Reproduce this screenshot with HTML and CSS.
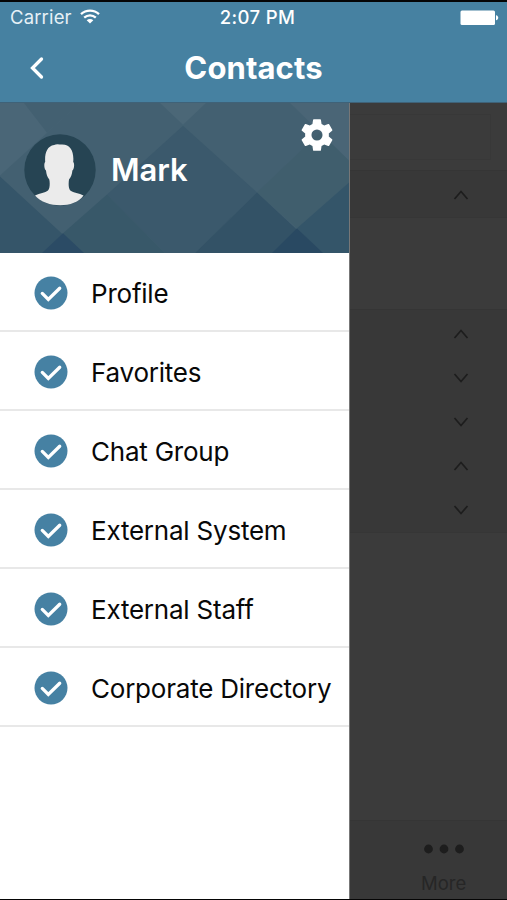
FILE: index.html
```html
<!DOCTYPE html>
<html lang="en">
<head>
<meta charset="utf-8">
<title>Contacts</title>
<link rel="stylesheet" href="styles.css">
</head>
<body>
<svg class="defs" width="0" height="0" aria-hidden="true">
  <symbol id="check" viewBox="0 0 34 34"><circle cx="17" cy="17" r="16.5" fill="#4681a3"/><path d="M8.3 17.4l6 6L25.7 12.2" fill="none" stroke="#fff" stroke-width="3.3" stroke-linecap="round" stroke-linejoin="miter"/></symbol>
  <symbol id="up" viewBox="0 0 16 10"><path d="M1.5 9L8 1.5 14.5 9" fill="none" stroke="#1d1d1d" stroke-width="1.7"/></symbol>
  <symbol id="down" viewBox="0 0 16 10"><path d="M1.5 1L8 8.5 14.5 1" fill="none" stroke="#1d1d1d" stroke-width="1.7"/></symbol>
</svg>
<div class="screen">
  <header class="top">
    <div class="status">
      <div class="carrier"><span>Carrier</span>
        <svg width="20" height="15" viewBox="0 0 20 15"><g fill="none" stroke="#fff" stroke-width="2.3"><path d="M1 5.2C6 .4 14 .4 19 5.2"/><path d="M4.2 8.7C7.5 5.7 12.5 5.7 15.8 8.7"/></g><path d="M6.7 11.2C8.5 9.5 11.5 9.5 13.3 11.2L10 14.4z" fill="#fff"/></svg>
      </div>
      <div class="time">2:07 PM</div>
      <svg class="battery" width="39" height="16" viewBox="0 0 39 16"><rect x=".5" y=".5" width="34.5" height="14.5" rx="1.5" fill="#fff"/><path d="M36 5.3c3 .5 3 4.5 0 5z" fill="#fff"/></svg>
    </div>
    <div class="nav">
      <svg class="back" width="16" height="24" viewBox="0 0 16 24"><path d="M12.5 3L3.5 12l9 9" fill="none" stroke="#fff" stroke-width="3.3" stroke-linecap="round"/></svg>
      <h1>Contacts</h1>
    </div>
  </header>
  <div class="body">
    <aside class="drawer">
      <div class="hero">
        <svg class="pattern" viewBox="0 0 349 151" preserveAspectRatio="none">
          <rect width="349" height="151" fill="#436071"/>
          <path d="M0 0H80L0 73z" fill="#4a6677"/>
          <path d="M24 0H80L47 30z" fill="#436071"/>
          <path d="M0 74L83 151H0z" fill="#355569"/>
          <path d="M63 131L107 92 165 151H45z" fill="#385869"/>
          <path d="M107 92L183 23 257 90 195 151H165z" fill="#3b596c"/>
          <path d="M63 131L84 151H42z" fill="#2b4b65"/>
          <path d="M160 0H206L183 22z" fill="#4b6777"/>
          <path d="M257 90L349 2V80L297 126z" fill="#405e6d"/>
          <path d="M290 0H349V58z" fill="#4a6576"/>
          <path d="M257 90L322 151H195z" fill="#335266"/>
          <path d="M297 126L349 80V151H322z" fill="#345569"/>
          <path d="M297 126L323 151H272z" fill="#294962"/>
        </svg>
        <svg class="avatar" width="72" height="72" viewBox="0 0 72 72"><circle cx="36" cy="36" r="35.7" fill="#264453"/><path d="M11 61.5C16 59 21 59 24 56.500c2-2 2-8 1.300-11-2.200-2.500-2.800-5-3.300-9-1.700-1-2.400-7-.8-8.500-.6-8 1.500-16 9-17 2-1.500 5-.6 8-.6 8.500.2 12 7 11 17.600 1.700 1.500.8 7.500-.8 8.500-.5 4-1.200 6.500-3.400 9-.6 4-.6 9 1.300 11 3 2.500 9 2.500 13.200 5C51 74.500 22 74.500 11 61.500z" fill="#ebebeb"/></svg>
        <div class="name">Mark</div>
        <svg class="gear" width="38" height="38" viewBox="0 0 24 24"><path fill="#fff" d="M19.430 12.980c.04-.32.070-.64.070-.98s-.03-.66-.07-.98l2.110-1.650c.19-.15.240-.42.120-.64l-2-3.460c-.12-.22-.39-.3-.61-.22l-2.490 1c-.52-.4-1.080-.73-1.690-.98l-.38-2.650C14.460 2.180 14.250 2 14 2h-4c-.25 0-.46.180-.49.420l-.38 2.650c-.61.250-1.170.590-1.690.980l-2.490-1c-.23-.09-.49 0-.61.220l-2 3.460c-.13.220-.07.490.120.640l2.110 1.650c-.04.320-.07.650-.07.980s.03.660.070.980l-2.110 1.650c-.19.150-.24.420-.12.640l2 3.460c.12.220.390.300.610.220l2.490-1c.52.400 1.080.730 1.690.980l.38 2.650c.03.240.240.420.490.420h4c.25 0 .46-.18.490-.42l.38-2.650c.61-.25 1.170-.59 1.690-.98l2.490 1c.23.090.490 0 .610-.22l2-3.460c.12-.22.070-.49-.12-.64l-2.110-1.650zM12 15.500a3.500 3.500 0 1 1 0-7 3.500 3.500 0 0 1 0 7z"/></svg>
      </div>
      <ul class="menu">
        <li><svg><use href="#check"/></svg><span>Profile</span></li>
        <li><svg><use href="#check"/></svg><span>Favorites</span></li>
        <li><svg><use href="#check"/></svg><span>Chat Group</span></li>
        <li><svg><use href="#check"/></svg><span>External System</span></li>
        <li><svg><use href="#check"/></svg><span>External Staff</span></li>
        <li><svg><use href="#check"/></svg><span>Corporate Directory</span></li>
      </ul>
    </aside>
    <main class="dimmed">
      <div class="search"><div class="field"></div></div>
      <div class="section first"><svg><use href="#up"/></svg></div>
      <div class="entry"></div>
      <div class="sections">
        <div class="section"><svg><use href="#up"/></svg></div>
        <div class="section"><svg><use href="#down"/></svg></div>
        <div class="section"><svg><use href="#down"/></svg></div>
        <div class="section"><svg><use href="#up"/></svg></div>
        <div class="section"><svg><use href="#down"/></svg></div>
      </div>
      <div class="tab">
        <svg width="42" height="10" viewBox="0 0 42 10" fill="#1d1d1d"><circle cx="5.500" cy="5" r="4.400"/><circle cx="21" cy="5" r="4.400"/><circle cx="36.500" cy="5" r="4.400"/></svg>
        <span>More</span>
      </div>
    </main>
  </div>
</div>
</body>
</html>
```
FILE: styles.css
```css
* { box-sizing: border-box; }
body { margin: 0; background: #000; font-family: Inter, "Liberation Sans", sans-serif; }
.defs { position: absolute; }
svg { display: block; flex: none; }
.screen { width: 507px; height: 900px; padding: 2px 0 1px; display: flex; flex-direction: column; background: #050505; overflow: hidden; }
.top { height: 101px; flex: none; background: #4681a1; border-bottom: 1px solid #3f6278; color: #fff; }
.status { height: 31px; display: grid; grid-template-columns: 1fr auto 1fr; align-items: center; padding: 0 8px 0 10px; font-size: 18.500px; line-height: 31px; }
.carrier { display: flex; align-items: center; gap: 8px; color: #e6f1f7; letter-spacing: .15px; }
.carrier svg { margin-top: -2px; }
.time { margin: 0 -3px 0 3px; font-weight: 500; font-size: 18.500px; letter-spacing: .4px; }
.battery { justify-self: end; }
.nav { height: 69px; padding-top: 1px; display: grid; grid-template-columns: 80px 1fr 80px; align-items: center; }
.back { margin-left: 29px; }
h1 { margin: 0; font-size: 31px; font-weight: 650; letter-spacing: .1px; line-height: 40px; text-align: center; }
.body { flex: 1; min-height: 0; display: grid; grid-template-columns: 349px 1fr; }
.drawer { background: #fff; }
.hero { height: 150px; position: relative; display: flex; padding: 31px 13px 0 24px; color: #fff; }
.pattern { position: absolute; left: 0; top: 0; width: 349px; height: 150px; }
.avatar, .name, .gear { position: relative; }
.name { margin: 16px 0 0 15px; font-size: 31px; line-height: 40px; height: 40px; font-weight: 600; letter-spacing: -.1px; }
.gear { margin: -18px 0 0 auto; }
.menu { margin: 0; padding: 0; list-style: none; }
.menu li { height: 79px; display: flex; align-items: center; padding: 2px 0 0 34px; gap: 23px; border-bottom: 2px solid #e8e8e8; font-size: 26px; letter-spacing: -.22px; color: #080808; white-space: nowrap; }
.menu svg { width: 34px; height: 34px; }
.menu span { padding-top: 1px; }
.dimmed { display: flex; flex-direction: column; background: #3b3b3b; border-left: 1px solid #777; }
.search { height: 68px; padding: 11px 16px 11px 0; border-bottom: 1px solid #353535; }
.field { height: 46px; border: 1px solid #383838; border-left: 0; }
.section { height: 44px; display: flex; justify-content: flex-end; align-items: center; padding-right: 38px; background: #383838; }
.section svg { width: 16px; height: 10px; }
.first { height: 47px; padding-top: 2px; border-bottom: 1px solid #363636; }
.entry { height: 91px; }
.sections { padding: 2px 0 0; background: #383838; border-top: 1px solid #353535; border-bottom: 1px solid #363636; }
.tab { margin-top: auto; height: 79px; padding: 23px 42px 0 0; display: flex; flex-direction: column; align-items: flex-end; background: #383838; border-top: 1px solid #353535; color: #262626; }
.tab svg { width: 42px; height: 10px; }
.tab span { width: 48px; margin: 17px -4px 0 0; font-size: 18.500px; line-height: 24px; }
```
